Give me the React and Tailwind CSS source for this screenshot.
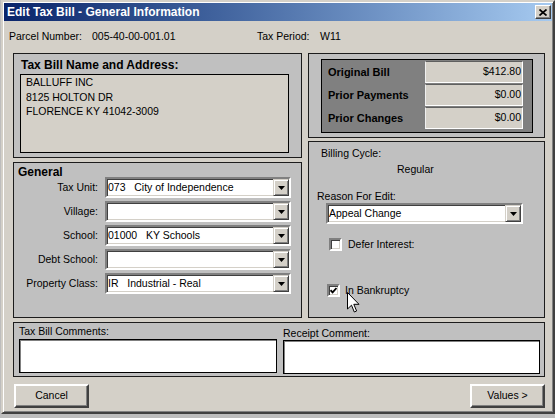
import React from "react";

const sunken =
  "border-2 border-t-[#808080] border-l-[#808080] border-b-white border-r-white shadow-[inset_1px_1px_0_#404040,inset_-1px_-1px_0_#d4d0c8]";
const raised =
  "border-2 border-t-white border-l-white border-b-[#404040] border-r-[#404040] shadow-[inset_-1px_-1px_0_#808080]";
const panel = "border border-[#1c1c1c] bg-[#c0c0c0]";

function Combo({ value = "", className = "" }) {
  return (
    <div className={`flex h-[21px] bg-white ${sunken} ${className}`}>
      <span className="flex-1 whitespace-pre pl-[1px] leading-[17px]">{value}</span>
      <span className="flex w-[16px] items-center justify-center border border-t-[#d4d0c8] border-l-[#d4d0c8] border-b-[#404040] border-r-[#404040] bg-[#d4d0c8] shadow-[inset_1px_1px_0_#ffffff,inset_-1px_-1px_0_#808080]">
        <svg width="7" height="4" viewBox="0 0 7 4">
          <path d="M0 0h7L3.5 4z" fill="#000" />
        </svg>
      </span>
    </div>
  );
}

function Check({ checked }) {
  return (
    <span className={`flex h-[13px] w-[13px] items-center justify-center bg-white ${sunken}`}>
      {checked && (
        <svg width="7" height="7" viewBox="0 0 7 7">
          <path d="M0.5 3.2L2.6 5.4L6.5 1" stroke="#000" strokeWidth="1.8" fill="none" />
        </svg>
      )}
    </span>
  );
}

function GeneralRow({ label, value }) {
  return (
    <div className="flex h-[21px] items-center">
      <span className="w-[80px] text-right">{label}</span>
      <Combo value={value} className="ml-[7px] w-[186px]" />
    </div>
  );
}

function MoneyRow({ label, value }) {
  return (
    <div className="flex h-[22px] items-center justify-between">
      <span className="text-[11px] font-bold">{label}</span>
      <span className="flex h-[22px] w-[98px] items-center justify-end border border-t-[#606060] border-l-[#f0f0f0] border-b-white border-r-white bg-[#d4d0c8] pr-[1px]">
        {value}
      </span>
    </div>
  );
}

export default function App() {
  return (
    <div className="relative h-[418px] w-[555px] overflow-hidden bg-[#bdbdbd] pl-[1px] font-['Liberation_Sans',Arial,sans-serif] text-[10.5px] text-black">
      <div className="flex h-[414px] w-[554px] flex-col border-2 border-t-[#d4d0c8] border-l-[#d4d0c8] border-b-[#404040] border-r-[#404040] bg-[#d4d0c8] p-[1px] shadow-[inset_1px_1px_0_#ffffff,inset_-1px_-1px_0_#808080]">
        {/* title bar */}
        <div className="flex h-[18px] items-center justify-between bg-linear-to-r from-[#0a246a] to-[#a6caf0] pl-[3px] pr-[1px]">
          <span className="text-[12px] font-bold text-white">
            Edit Tax Bill - General Information
          </span>
          <span className={`flex h-[14px] w-[16px] items-center justify-center bg-[#d4d0c8] ${"border border-t-white border-l-white border-b-[#404040] border-r-[#404040] shadow-[inset_-1px_-1px_0_#808080]"}`}>
            <svg width="8" height="7" viewBox="0 0 8 7">
              <path d="M0.5 0.5L7.5 6.5M7.5 0.5L0.5 6.5" stroke="#000" strokeWidth="1.7" />
            </svg>
          </span>
        </div>

        <div className="flex h-[32px] items-center pl-[5px]">
          <span className="w-[83px]">Parcel Number:</span>
          <span className="w-[165px]">005-40-00-001.01</span>
          <span className="w-[63px]">Tax Period:</span>
          <span>W11</span>
        </div>

        <div className="grid grid-cols-[289px_237px] gap-x-[6px] pl-[9px]">
          <div className="flex flex-col gap-[4px]">
            <div className={`h-[105px] pl-[6px] ${panel}`}>
              <div className="h-[20px] pl-[1px] pt-[4px] text-[12px] font-bold leading-[14px]">
                Tax Bill Name and Address:
              </div>
              <div className="h-[79px] w-[269px] border border-black bg-[#d4d0c8] pl-[5px] leading-[14.5px]">
                <div>BALLUFF INC</div>
                <div>8125 HOLTON DR</div>
                <div>FLORENCE KY 41042-3009</div>
              </div>
            </div>

            <div className={`h-[156px] pl-[4px] ${panel}`}>
              <div className="h-[14px] pt-[2px] text-[12px] font-bold leading-[14px]">General</div>
              <div className="flex flex-col gap-[3px]">
                <GeneralRow label="Tax Unit:" value="073   City of Independence" />
                <GeneralRow label="Village:" />
                <GeneralRow label="School:" value="01000   KY Schools" />
                <GeneralRow label="Debt School:" />
                <GeneralRow label="Property Class:" value="IR   Industrial - Real" />
              </div>
            </div>
          </div>

          <div className="flex flex-col gap-[3px]">
            <div className={`h-[85px] pl-[12px] pt-[5px] ${panel}`}>
              <div className="flex h-[74px] w-[212px] flex-col gap-[1px] border border-black bg-[#808080] pl-[6px] pr-[9px] pt-[1px]">
                <MoneyRow label="Original Bill" value="$412.80" />
                <MoneyRow label="Prior Payments" value="$0.00" />
                <MoneyRow label="Prior Changes" value="$0.00" />
              </div>
            </div>

            <div className={`h-[177px] ${panel}`}>
              <div className="ml-[12px] mt-[4px] leading-[14px]">Billing Cycle:</div>
              <div className="ml-[88px] mt-[2px] leading-[14px]">Regular</div>
              <div className="ml-[8px] mt-[13px] leading-[14px]">Reason For Edit:</div>
              <Combo value="Appeal Change" className="ml-[17px] w-[197px]" />
              <div className="ml-[20px] mt-[13px] flex items-center gap-[6px]">
                <Check />
                <span>Defer Interest:</span>
              </div>
              <div className="ml-[18px] mt-[30px] flex items-center gap-[5px]">
                <Check checked />
                <span>In Bankruptcy</span>
              </div>
            </div>
          </div>
        </div>

        <div className={`ml-[9px] mt-[4px] grid h-[55px] w-[532px] grid-cols-[258px_257px] gap-x-[6px] pl-[5px] pt-[1px] ${panel}`}>
          <div>
            <div className="h-[15px] leading-[15px]">Tax Bill Comments:</div>
            <div className="h-[34px] border border-black bg-white shadow-[inset_1px_1px_0_#808080]" />
          </div>
          <div>
            <div className="h-[15px] pt-[2px] leading-[15px]">Receipt Comment:</div>
            <div className="mt-[1px] h-[34px] border border-black bg-white shadow-[inset_1px_1px_0_#808080]" />
          </div>
        </div>

        <div className="mt-[7px] flex justify-between pl-[10px] pr-[7px]">
          <button className={`h-[24px] w-[75px] bg-[#d4d0c8] ${raised}`}>Cancel</button>
          <button className={`h-[24px] w-[75px] bg-[#d4d0c8] ${raised}`}>Values &gt;</button>
        </div>
      </div>

      {/* mouse pointer */}
      <svg className="absolute left-[347px] top-[292px]" width="13" height="22" viewBox="0 0 13 22">
        <path d="M0.5 0.5V17L4.5 13.2L7.3 20L9.6 19L6.8 12.3H12Z" fill="#fff" stroke="#000" strokeWidth="1" />
      </svg>
    </div>
  );
}
